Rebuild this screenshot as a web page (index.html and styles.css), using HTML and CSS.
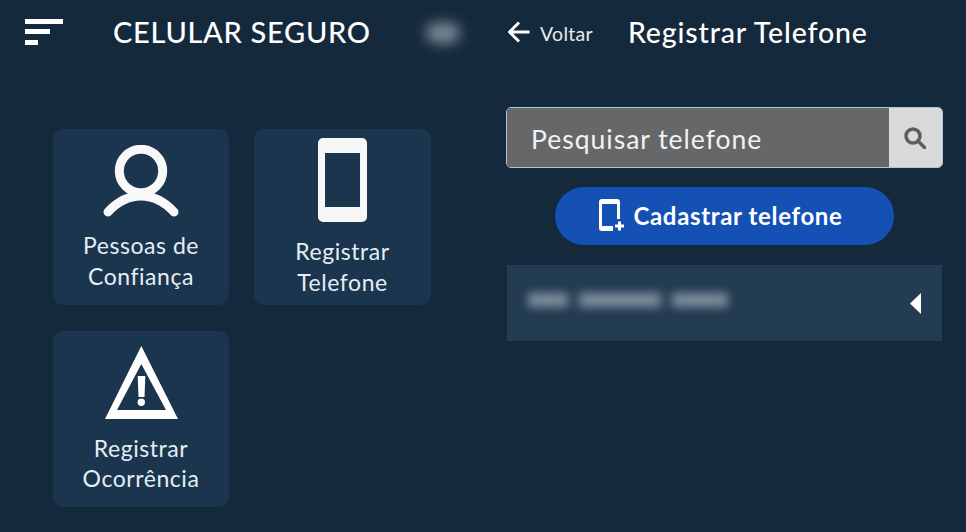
FILE: index.html
```html
<!DOCTYPE html>
<html lang="pt-BR">
<head>
<meta charset="utf-8">
<title>Celular Seguro</title>
<link rel="stylesheet" href="styles.css">
</head>
<body>
<main class="screens">
  <section class="panel panel-home">
    <header class="home-header">
      <svg class="menu-icon" viewBox="0 0 38 26" aria-hidden="true"><path d="M0 0h38v5H0zM0 10h25v5H0zM0 21h13v5H0z"/></svg>
      <h1 class="home-title">CELULAR SEGURO</h1>
      <div class="avatar-blur"></div>
    </header>
    <nav class="tiles">
      <a class="tile">
        <svg class="tile-icon icon-person" viewBox="0 0 78 72" aria-hidden="true"><circle cx="39" cy="26" r="21.7"/><path d="M6 67C16 56 27 51 39 51S62 56 72 67"/></svg>
        <span class="tile-label">Pessoas de<br>Confiança</span>
      </a>
      <a class="tile">
        <svg class="tile-icon icon-phone" viewBox="0 0 49 84" aria-hidden="true"><path fill-rule="evenodd" d="M5 0h39a5 5 0 0 1 5 5v74a5 5 0 0 1-5 5H5a5 5 0 0 1-5-5V5a5 5 0 0 1 5-5zM7 15v54h35V15z"/></svg>
        <span class="tile-label">Registrar<br>Telefone</span>
      </a>
      <a class="tile">
        <svg class="tile-icon icon-warning" viewBox="0 0 73 73" aria-hidden="true"><path fill-rule="evenodd" d="M36.3 0L73 73H0zM36.300 18L12 64h49z"/><path d="M32.7 30h7.6l-.8 21h-6z"/><circle cx="36.3" cy="56.3" r="3.7"/></svg>
        <span class="tile-label tile-label-tight">Registrar<br>Ocorrência</span>
      </a>
    </nav>
  </section>
  <section class="panel panel-phones">
    <header class="phones-header">
      <a class="back">
        <svg class="back-icon" viewBox="0 0 22 22" aria-hidden="true"><path d="M21.5 11H2M11 1.5L1.5 11l9.5 9.5"/></svg>
        <span>Voltar</span>
      </a>
      <h2 class="phones-title">Registrar Telefone</h2>
    </header>
    <div class="search">
      <div class="search-input">Pesquisar telefone</div>
      <div class="search-btn">
        <svg class="search-icon" viewBox="0 0 22 22" aria-hidden="true"><circle cx="9" cy="9" r="7"/><path d="M14 14l6.500 6.500"/></svg>
      </div>
    </div>
    <button class="add-btn" type="button">
      <svg class="add-icon" viewBox="0 0 27 33" aria-hidden="true"><path class="add-body" fill-rule="evenodd" d="M3 0h15a3 3 0 0 1 3 3v26a3 3 0 0 1-3 3H3a3 3 0 0 1-3-3V3a3 3 0 0 1 3-3zM3 5v22h15V5z"/><rect class="add-gap" x="14" y="20" width="13" height="13"/><path class="add-plus" d="M20.500 22.500v9M16 27h9"/></svg>
      <span>Cadastrar telefone</span>
    </button>
    <div class="phone-row">
      <div class="phone-blur"><i class="seg seg-a"></i><i class="seg seg-b"></i><i class="seg seg-c"></i></div>
      <svg class="row-caret" viewBox="0 0 11 21" aria-hidden="true"><path d="M11 0v21L0 10.500z"/></svg>
    </div>
  </section>
</main>
</body>
</html>
```
FILE: styles.css
```css
* { box-sizing: border-box; }
html, body { margin: 0; height: 100%; }
body {
  background: #15293c;
  color: #fff;
  font-family: "Lato", "Open Sans", sans-serif;
  overflow: hidden;
}
.screens {
  display: grid;
  grid-template-columns: 483px 483px;
  height: 532px;
}
.panel { min-width: 0; }
.panel-home { border-right: 1px solid #182d41; }

.home-header {
  display: flex;
  align-items: flex-start;
  height: 66px;
  padding: 19px 0 0 25px;
}
.menu-icon { width: 38px; height: 26px; fill: #fff; flex: none; }
.home-title {
  margin: -6px 0 0 50px;
  font-size: 29px;
  line-height: 38px;
  font-weight: 500;
  letter-spacing: 0.7px;
  white-space: nowrap;
}
.avatar-blur {
  width: 34px;
  height: 20px;
  margin: 4px 0 0 55px;
  background: #7f8e9b;
  border-radius: 10px;
  filter: blur(7px);
}

.tiles {
  display: grid;
  grid-template-columns: 176px 177px;
  grid-auto-rows: 176px;
  column-gap: 25px;
  row-gap: 26px;
  margin: 63px 0 0 53px;
}
.tile {
  display: flex;
  flex-direction: column;
  align-items: center;
  justify-content: center;
  padding-top: 3px;
  background: #1b354e;
  border-radius: 10px;
}
.tile-icon { display: block; flex: none; margin-bottom: 13px; }
.tile-label {
  padding-bottom: 1px;
  font-size: 23px;
  line-height: 31px;
  text-align: center;
  color: #e4eef4;
  letter-spacing: 0.55px;
}
.tile-label-tight { padding-bottom: 2px; line-height: 30px; }
.icon-person { width: 78px; height: 72px; fill: none; stroke: #f8f8f8; stroke-width: 9; stroke-linecap: round; }
.icon-phone { width: 49px; height: 84px; fill: #f7f7f7; margin-bottom: 14px; }
.icon-warning { width: 73px; height: 73px; fill: #fff; margin-bottom: 14px; }

.phones-header {
  display: flex;
  align-items: center;
  height: 66px;
  padding-left: 25px;
}
.back {
  display: flex;
  align-items: center;
  gap: 10px;
  font-size: 19.500px;
  color: #e4ebf0;
  letter-spacing: 0.3px;
}
.back-icon { width: 22px; height: 22px; fill: none; stroke: #fff; stroke-width: 3; margin-top: -2px; }
.phones-title {
  margin: -2px 0 0 35px;
  font-size: 28.500px;
  font-weight: 500;
  letter-spacing: 0.85px;
  white-space: nowrap;
}

.search {
  display: flex;
  width: 437px;
  height: 61px;
  margin: 41px 0 0 23px;
  border: 1px solid #b4c4d0;
  border-radius: 5px;
  overflow: hidden;
}
.search-input {
  flex: 1;
  padding-left: 24px;
  background: #666768;
  color: #f2f2f2;
  font-size: 26.500px;
  line-height: 62px;
  letter-spacing: 1px;
}
.search-btn {
  display: flex;
  align-items: center;
  justify-content: center;
  width: 53px;
  padding-right: 2px;
  background: #d9d9d9;
}
.search-icon { width: 22px; height: 22px; fill: none; stroke: #5e5e5e; stroke-width: 3.500; stroke-linecap: round; }

.add-btn {
  display: flex;
  align-items: center;
  justify-content: center;
  gap: 8px;
  width: 339px;
  height: 58px;
  margin: 19px 0 0 72px;
  padding: 0 8px 2px 0;
  border: 0;
  border-radius: 29px;
  background: #1551b5;
  color: #fff;
  font-family: inherit;
  font-size: 24px;
  font-weight: 700;
  letter-spacing: 0.65px;
}
.add-icon { width: 27px; height: 33px; flex: none; }
.add-body { fill: #fff; }
.add-gap { fill: #1551b5; }
.add-plus { fill: none; stroke: #fff; stroke-width: 3; }

.phone-row {
  display: flex;
  align-items: center;
  justify-content: space-between;
  width: 435px;
  height: 76px;
  margin: 20px 0 0 24px;
  padding: 0 21px;
  background: #233c52;
}
.phone-blur { display: flex; gap: 11px; filter: blur(5px); margin-top: -6px; }
.seg { display: block; height: 14px; background: #7f8e9b; }
.seg-a { width: 40px; }
.seg-b { width: 82px; }
.seg-c { width: 56px; }
.row-caret { width: 11px; height: 21px; fill: #fff; flex: none; }
```
